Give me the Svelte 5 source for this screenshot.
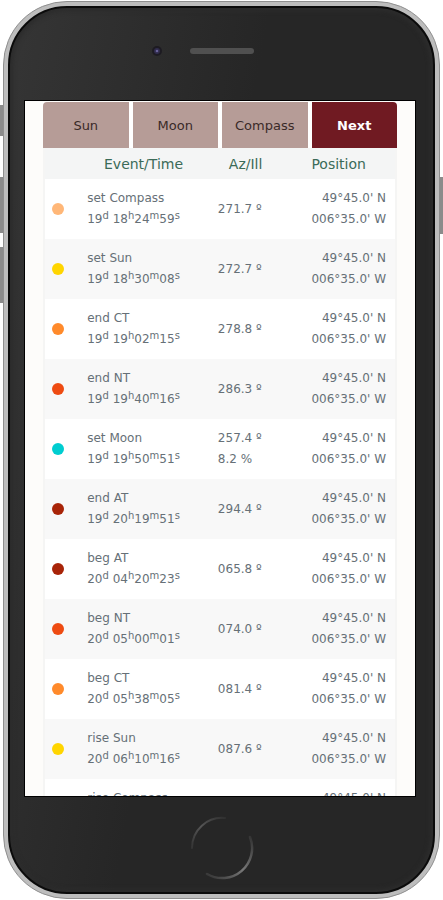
<script>
    let tabs = ['Sun', 'Moon', 'Compass', 'Next'];
    let activeTab = $state('Next');

    const lat = "49°45.0' N";
    const lon = "006°35.0' W";

    let events = [
        { color: '#ffb778', name: 'set Compass', time: [19, '18', '24', '59'], az: '271.7 º' },
        { color: '#ffd500', name: 'set Sun', time: [19, '18', '30', '08'], az: '272.7 º' },
        { color: '#ff8a2b', name: 'end CT', time: [19, '19', '02', '15'], az: '278.8 º' },
        { color: '#ee4b12', name: 'end NT', time: [19, '19', '40', '16'], az: '286.3 º' },
        { color: '#00cdd0', name: 'set Moon', time: [19, '19', '50', '51'], az: '257.4 º', ill: '8.2 %' },
        { color: '#a82408', name: 'end AT', time: [19, '20', '19', '51'], az: '294.4 º' },
        { color: '#a82408', name: 'beg AT', time: [20, '04', '20', '23'], az: '065.8 º' },
        { color: '#ee4b12', name: 'beg NT', time: [20, '05', '00', '01'], az: '074.0 º' },
        { color: '#ff8a2b', name: 'beg CT', time: [20, '05', '38', '05'], az: '081.4 º' },
        { color: '#ffd500', name: 'rise Sun', time: [20, '06', '10', '16'], az: '087.6 º' },
        { color: '#ffb778', name: 'rise Compass', time: [20, '06', '15', '25'], az: '088.6 º' }
    ];
</script>

<div class="stage">
    <span class="side-button mute"></span>
    <span class="side-button volume-up"></span>
    <span class="side-button volume-down"></span>
    <span class="side-button power"></span>

    <div class="phone">
        <div class="body">
            <div class="top-bezel">
                <svg class="camera" viewBox="0 0 12 12" aria-hidden="true">
                    <circle cx="6" cy="6" r="5" fill="#1d1b22" />
                    <circle cx="6" cy="6" r="3" fill="#302c4c" />
                    <circle cx="6" cy="6" r="1.3" fill="#69629a" />
                </svg>
                <span class="speaker"></span>
                <span class="bezel-end"></span>
            </div>

            <div class="screen">
                <div class="panel">
                    <nav class="tabs">
                        {#each tabs as tab}
                            <button type="button" class:active={activeTab === tab} onclick={() => (activeTab = tab)}>{tab}</button>
                        {/each}
                    </nav>

                    <table>
                        <thead>
                            <tr>
                                <th class="dot-col"></th>
                                <th class="event-col">Event/Time</th>
                                <th class="az-col">Az/Ill</th>
                                <th class="pos-col">Position</th>
                            </tr>
                        </thead>
                        <tbody>
                            {#each events as ev}
                                <tr>
                                    <td><span class="dot" style="background-color: {ev.color}"></span></td>
                                    <td>
                                        <div>{ev.name}</div>
                                        <div>{ev.time[0]}<sup>d</sup> {ev.time[1]}<sup>h</sup>{ev.time[2]}<sup>m</sup>{ev.time[3]}<sup>s</sup></div>
                                    </td>
                                    <td class="az">
                                        <div>{ev.az}</div>
                                        {#if ev.ill}<div>{ev.ill}</div>{/if}
                                    </td>
                                    <td class="pos">
                                        <div>{lat}</div>
                                        <div>{lon}</div>
                                    </td>
                                </tr>
                            {/each}
                        </tbody>
                    </table>
                </div>
            </div>

            <div class="bottom-bezel">
                <button type="button" class="home" aria-label="Home">
                    <svg viewBox="0 0 64 64" fill="none" stroke-linecap="round">
                        <defs>
                            <linearGradient id="arc-left" x1="0" y1="1" x2="1" y2="0">
                                <stop offset="0" stop-color="#343434" />
                                <stop offset="0.5" stop-color="#555" />
                                <stop offset="1" stop-color="#303030" />
                            </linearGradient>
                            <linearGradient id="arc-right" x1="1" y1="0" x2="0" y2="1">
                                <stop offset="0" stop-color="#333" />
                                <stop offset="0.5" stop-color="#777" />
                                <stop offset="1" stop-color="#333" />
                            </linearGradient>
                        </defs>
                        <path d="M2 32 A30 30 0 0 1 35 2" stroke="url(#arc-left)" stroke-width="2" />
                        <path d="M60 21 A30 30 0 0 1 17 58" stroke="url(#arc-right)" stroke-width="2.5" />
                    </svg>
                </button>
            </div>
        </div>
    </div>
</div>

<style>
    :global(body) {
        margin: 0;
        background: #fff;
    }

    .stage {
        position: relative;
        box-sizing: border-box;
        height: 100vh;
        padding: 1px 3px 1px 3px;
        overflow: hidden;
        font-family: "DejaVu Sans", Verdana, sans-serif;
    }

    /* hardware buttons stick out from behind the frame */
    .side-button {
        position: absolute;
        left: 0;
        width: 6px;
        background: #8b8b8b;
    }

    .mute {
        top: 105px;
        height: 31px;
    }

    .volume-up {
        top: 177px;
        height: 56px;
    }

    .volume-down {
        top: 247px;
        height: 56px;
    }

    .power {
        left: auto;
        right: 0;
        top: 177px;
        height: 57px;
    }

    .phone {
        position: relative;
        box-sizing: border-box;
        height: 100%;
        padding: 4px;
        border: 1px solid #8f8f8f;
        border-radius: 64px;
        background: #bdbdbd;
    }

    .body {
        display: flex;
        flex-direction: column;
        box-sizing: border-box;
        height: 100%;
        padding: 0 17px 0 14px;
        border: 2px solid #0b0b0b;
        border-radius: 59px;
        background: linear-gradient(100deg, #353535 0, #262626 45%);
        box-shadow: inset 0 0 4px 3px #2c2c2c;
    }

    .top-bezel {
        display: flex;
        align-items: center;
        justify-content: center;
        gap: 27px;
        box-sizing: border-box;
        flex: 0 0 92px;
        padding-bottom: 6px;
    }

    .camera {
        width: 12px;
        height: 12px;
    }

    .speaker {
        width: 64px;
        height: 6px;
        border-radius: 3px;
        background: #505050;
    }

    .bezel-end {
        width: 8px;
    }

    .screen {
        flex: 1;
        min-height: 0;
        padding: 1px 18px 0;
        overflow-y: auto;
        scrollbar-width: none;
        border: 1px solid #000;
        background: #fdfcfa;
    }

    .panel {
        background: #fff;
    }

    .tabs {
        display: flex;
        gap: 4px;
    }

    .tabs button {
        flex: 1;
        height: 46px;
        padding: 0;
        border: 0;
        background: #b69c97;
        color: #3a2a28;
        font-family: inherit;
        font-size: 13px;
    }

    .tabs button:first-child {
        border-top-left-radius: 4px;
    }

    .tabs button:last-child {
        border-top-right-radius: 4px;
    }

    .tabs button.active {
        background: #701a22;
        color: #fff;
        font-weight: bold;
    }

    table {
        width: 100%;
        table-layout: fixed;
        border-collapse: collapse;
        border: 2px solid #f5f5f4;
        border-width: 0 2px;
        color: #667077;
        font-size: 12px;
    }

    th {
        height: 31px;
        padding: 0;
        background: #f4f5f5;
        color: #3b6b58;
        font-size: 14px;
        font-weight: normal;
    }

    .dot-col {
        width: 12%;
    }

    .event-col {
        width: 32%;
    }

    .az-col {
        width: 26%;
    }

    .pos-col {
        padding-right: 9px;
    }

    td {
        height: 60px;
        padding: 0;
        line-height: 21px;
        white-space: nowrap;
    }

    tbody tr:nth-child(even) {
        background: #f8f8f8;
    }

    .az {
        padding-left: 18px;
    }

    .pos {
        padding-right: 9px;
        text-align: right;
    }

    sup {
        font-size: 10px;
        line-height: 0;
        vertical-align: 4px;
    }

    .dot {
        display: block;
        width: 12px;
        height: 12px;
        margin-left: 7px;
        border-radius: 50%;
    }

    .bottom-bezel {
        display: flex;
        align-items: center;
        justify-content: center;
        box-sizing: border-box;
        flex: 0 0 95px;
        padding: 6px 0 0 3px;
    }

    .home {
        width: 64px;
        height: 64px;
        padding: 0;
        border: 0;
        border-radius: 50%;
        background: none;
    }

    .home svg {
        display: block;
    }
</style>
